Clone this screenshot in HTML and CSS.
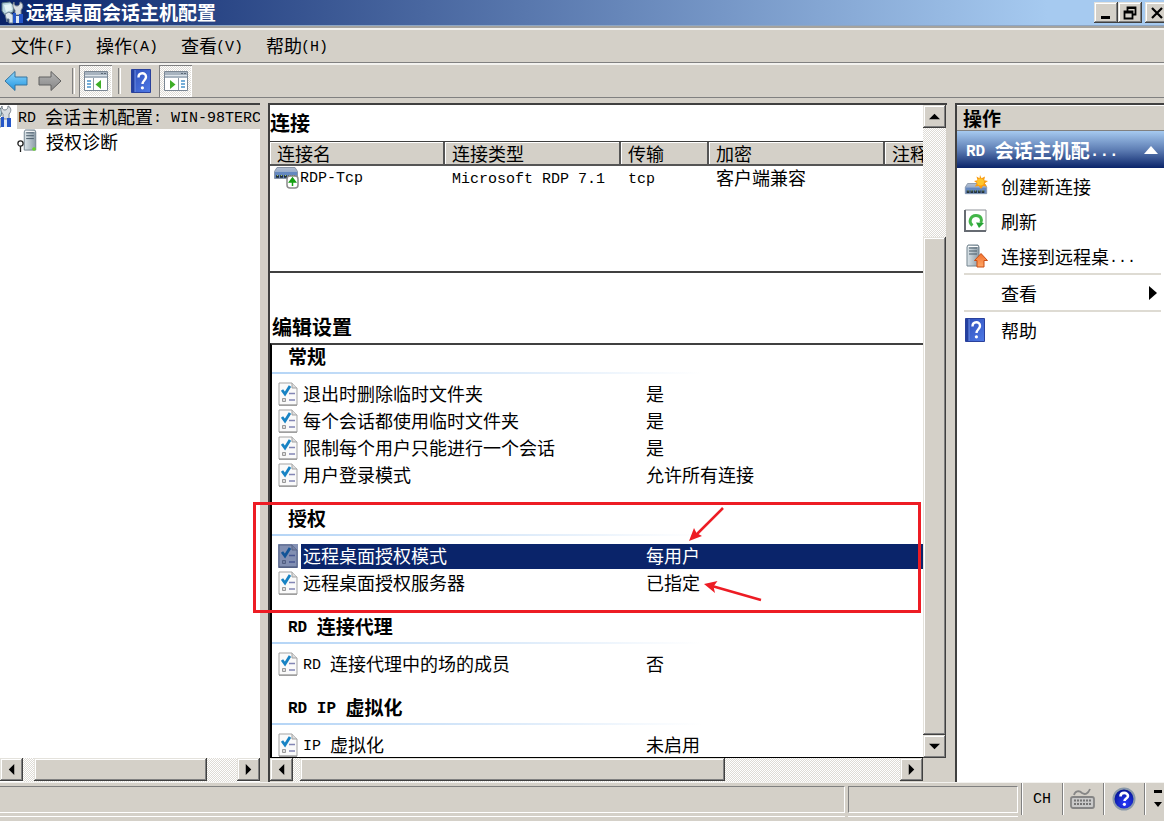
FILE: index.html
```html
<!DOCTYPE html>
<html lang="zh-CN">
<head>
<meta charset="utf-8">
<title>远程桌面会话主机配置</title>
<link rel="stylesheet" href="styles.css">
</head>
<body>
<svg class="defs" aria-hidden="true">
  <defs>
    <linearGradient id="gBlue" x1="0" y1="0" x2="0" y2="1"><stop offset="0" stop-color="#8fd6fb"/><stop offset="1" stop-color="#1e93e0"/></linearGradient>
    <linearGradient id="gGray" x1="0" y1="0" x2="0" y2="1"><stop offset="0" stop-color="#b5b5b5"/><stop offset="1" stop-color="#858585"/></linearGradient>
    <linearGradient id="gHelp" x1="0" y1="0" x2="1" y2="1"><stop offset="0" stop-color="#2c4cb8"/><stop offset="1" stop-color="#4f7ae6"/></linearGradient>
    <linearGradient id="gNic" x1="0" y1="0" x2="0" y2="1"><stop offset="0" stop-color="#b4bfd0"/><stop offset="1" stop-color="#6f92c6"/></linearGradient>
    <linearGradient id="gSrv" x1="0" y1="0" x2="1" y2="0"><stop offset="0" stop-color="#dce5ea"/><stop offset="1" stop-color="#8b9ba6"/></linearGradient>
    <linearGradient id="gOrange" x1="0" y1="0" x2="0" y2="1"><stop offset="0" stop-color="#f2702c"/><stop offset="1" stop-color="#ffa766"/></linearGradient>
    <radialGradient id="gBall" cx=".55" cy=".7" r=".7"><stop offset="0" stop-color="#2a3cff"/><stop offset="1" stop-color="#00108c"/></radialGradient>
  </defs>
  <symbol id="app" viewBox="0 0 24 24">
    <path d="M1 2 9 1l4 4-1 6-8 3-3-4z" fill="#b9d6df" stroke="#5b7783"/>
    <path d="M3 4l7-1 1 6-6 2z" fill="#e4f4f6"/>
    <path d="M13 1c0 3 1 4 3 4s3-2 3-4c3 1 4 5 1 8v5h-6V9c-2-2-3-5-1-8z" fill="#d8dde0" stroke="#77828c"/>
    <path d="M4 13l4-2 4 3v8H8v-4H6v3z" fill="#dfe8ee" stroke="#6d8295"/>
    <path d="M12 12h3v10h-3zM18 13h4v9h-4z" fill="#2456c8"/><path d="M15 15h3v7h-3z" fill="#dfe9f4"/>
  </symbol>
  <symbol id="helpbook" viewBox="0 0 20 24">
    <path d="M.5.5h19v23H.5z" fill="url(#gHelp)" stroke="#2a419c"/><path d="M1 1h3v22H1z" fill="#2340a0"/><path d="M4 1v22" stroke="#6e8fe4"/>
    <path d="M7.500 8.500C7.500 3 15 3 15 8c0 3-3.500 3.500-3.500 7" fill="none" stroke="#fff" stroke-width="2.400"/><circle cx="11.400" cy="18.800" r="1.600" fill="#fff"/>
  </symbol>
  <symbol id="sheet" viewBox="0 0 20 24">
    <path d="M1 1h13l5 5v17H1z" fill="#fafafa" stroke="#a3a3a3"/><path d="M14 1v5h5" fill="#ddd" stroke="#a3a3a3"/><path d="M1 23.200h18" stroke="#888"/>
    <path d="M4 8l3 4 5-8" fill="none" stroke="#1783c4" stroke-width="2.800"/>
    <path d="M11 11.500h6M11 18h6" stroke="#8386b5" stroke-width="1.500"/><path d="M4.500 16.500h3v3h-3z" fill="#ddd" stroke="#999"/>
  </symbol>
  <symbol id="server" viewBox="0 0 14 24">
    <path d="M2 1h10l1 2v19H1V3z" fill="url(#gSrv)" stroke="#73838e"/><path d="M3 4h8M3 7h8M3 10h8" stroke="#485a68"/><path d="M2 2.500h10" stroke="#fff"/>
  </symbol>
  <symbol id="nic" viewBox="0 0 24 14">
    <path d="M3 .5h18l2.500 4v7H.5v-7z" fill="url(#gNic)" stroke="#8895a8"/><path d="M1 5h22v6H1z" fill="#6488c0"/>
    <path d="M2 9.500h20" stroke="#22303c" stroke-width="2.600" stroke-dasharray="3 1"/><path d="M3 8.500h19" stroke="#a5cb62" stroke-dasharray="1 3"/>
  </symbol>
</svg>

<div class="window">
  <header class="titlebar">
    <svg class="app-icon"><use href="#app"/></svg>
    <h1>远程桌面会话主机配置</h1>
    <div class="winbtns">
      <button class="bevel" aria-label="最小化"><svg viewBox="0 0 16 16"><path d="M3 11h9v3H3z"/></svg></button>
      <button class="bevel" aria-label="还原"><svg viewBox="0 0 16 16"><path d="M5.500 6V2.500h8v7H11M5.500 3h8M2.500 6.500h8v7h-8zM2.500 7.500h8" fill="none" stroke="#000" stroke-width="1.800"/></svg></button>
      <button class="bevel close" aria-label="关闭"><svg viewBox="0 0 16 16"><path d="M3 3l10 10M13 3L3 13" stroke="#000" stroke-width="2.200"/></svg></button>
    </div>
  </header>

  <nav class="menubar">
    <button>文件<span class="lat">(F)</span></button>
    <button>操作<span class="lat">(A)</span></button>
    <button>查看<span class="lat">(V)</span></button>
    <button>帮助<span class="lat">(H)</span></button>
  </nav>

  <div class="toolbar">
    <button aria-label="后退"><svg width="24" height="22" viewBox="0 0 24 22"><path d="M1 11 11 1.500V7h12v8H11v5.500z" fill="url(#gBlue)" stroke="#37759f" stroke-linejoin="round"/></svg></button>
    <button aria-label="前进"><svg width="24" height="22" viewBox="0 0 24 22"><path d="M23 11 13 1.500V7H1v8h12v5.500z" fill="url(#gGray)" stroke="#606060" stroke-linejoin="round"/></svg></button>
    <span class="tsep"></span>
    <button class="pressed" aria-label="控制台树"><svg width="24" height="20" viewBox="0 0 24 20"><path d="M.5.500h23v19H.5z" fill="#fff" stroke="#7b8794"/><path d="M1 1h22v6H1z" fill="#a7b3bf"/><path d="M1 4.500h22" stroke="#dde4ea"/><path d="M17 2.500h5" stroke="#5b6875" stroke-dasharray="2 1"/><path d="M9.500 7v12" stroke="#8f9aa5"/><path d="M3 10h4M3 13h4M3 16h4" stroke="#4a94cb" stroke-width="1.500"/><path d="M17 9v9l-5.500-4.500z" fill="#3fae27"/></svg></button>
    <span class="tsep"></span>
    <button aria-label="帮助"><svg width="20" height="24"><use href="#helpbook"/></svg></button>
    <button class="pressed" aria-label="操作窗格"><svg width="24" height="20" viewBox="0 0 24 20"><path d="M.5.500h23v19H.5z" fill="#fff" stroke="#7b8794"/><path d="M1 1h22v6H1z" fill="#a7b3bf"/><path d="M1 4.500h22" stroke="#dde4ea"/><path d="M17 2.500h5" stroke="#5b6875" stroke-dasharray="2 1"/><path d="M14.500 7v12" stroke="#8f9aa5"/><path d="M17 10h4M17 13h4M17 16h4" stroke="#4a94cb" stroke-width="1.500"/><path d="M6 9v9l5.500-4.500z" fill="#3fae27"/></svg></button>
  </div>

  <main class="panes">
    <section class="tree">
      <ul>
        <li class="root"><svg class="root-icon" viewBox="11 0 13 24"><use href="#app" width="24" height="24"/></svg><span class="sel"><span class="lat">RD </span>会话主机配置<span class="lat">: WIN-98TERCI</span></span></li>
        <li class="child"><svg width="20" height="24" viewBox="0 0 20 24"><use href="#server" x="6" width="14" height="23"/><circle cx="17" cy="20" r="1.800" fill="#65d827"/><circle cx="3.500" cy="14.500" r="2.600" fill="#fff" stroke="#222" stroke-width="1.300"/><path d="M3.500 17v6" stroke="#222" stroke-width="1.300"/></svg><span>授权诊断</span></li>
      </ul>
      <div class="hscroll">
        <button class="bevel arrow" aria-label="向左滚动"><svg viewBox="0 0 12 12"><path d="M9 0v12L3 6z"/></svg></button>
        <div class="track"><div class="bevel thumb tree-thumb"></div></div>
        <button class="bevel arrow" aria-label="向右滚动"><svg viewBox="0 0 12 12"><path d="M3 0v12l6-6z"/></svg></button>
      </div>
    </section>

    <section class="center">
      <div class="content">
        <h2 class="conn-title">连接</h2>
        <div class="conn">
          <table>
            <colgroup><col class="c1"><col class="c2"><col class="c3"><col class="c2"><col></colgroup>
            <thead><tr><th>连接名</th><th>连接类型</th><th>传输</th><th>加密</th><th>注释</th></tr></thead>
            <tbody><tr>
              <td class="name"><svg width="25" height="22" viewBox="0 0 25 22"><use href="#nic" width="24" height="14"/><rect x="13" y="9" width="11" height="12" rx="3" fill="#fff" stroke="#8b8b8b" stroke-width="1.500"/><path d="M18.500 19v-4h-3l3-4 3 4h-3" fill="#16a012" stroke="#16a012" stroke-width="1.500"/></svg><span class="lat">RDP-Tcp</span></td>
              <td><span class="lat">Microsoft RDP 7.1</span></td><td><span class="lat">tcp</span></td><td>客户端兼容</td><td></td>
            </tr></tbody>
          </table>
        </div>
        <h2 class="edit-title">编辑设置</h2>
        <div class="settings">
          <section class="group">
            <h3>常规</h3>
            <dl>
              <div><dt><svg><use href="#sheet"/></svg><span>退出时删除临时文件夹</span></dt><dd>是</dd></div>
              <div><dt><svg><use href="#sheet"/></svg><span>每个会话都使用临时文件夹</span></dt><dd>是</dd></div>
              <div><dt><svg><use href="#sheet"/></svg><span>限制每个用户只能进行一个会话</span></dt><dd>是</dd></div>
              <div><dt><svg><use href="#sheet"/></svg><span>用户登录模式</span></dt><dd>允许所有连接</dd></div>
            </dl>
          </section>
          <section class="group">
            <h3>授权</h3>
            <dl>
              <div class="selected"><dt><svg><use href="#sheet"/><rect width="20" height="24" fill="#0a246a" opacity=".5"/></svg><span>远程桌面授权模式</span></dt><dd>每用户</dd></div>
              <div><dt><svg><use href="#sheet"/></svg><span>远程桌面授权服务器</span></dt><dd>已指定</dd></div>
            </dl>
          </section>
          <section class="group">
            <h3><span class="lat">RD </span>连接代理</h3>
            <dl><div><dt><svg><use href="#sheet"/></svg><span><span class="lat">RD </span>连接代理中的场的成员</span></dt><dd>否</dd></div></dl>
          </section>
          <section class="group">
            <h3><span class="lat">RD IP </span>虚拟化</h3>
            <dl><div><dt><svg><use href="#sheet"/></svg><span><span class="lat">IP </span>虚拟化</span></dt><dd>未启用</dd></div></dl>
          </section>
        </div>
      </div>
      <div class="vscroll">
        <button class="bevel arrow" aria-label="向上滚动"><svg viewBox="0 0 12 12"><path d="M0 9h12L6 3z"/></svg></button>
        <div class="track"><div class="bevel thumb"></div></div>
        <button class="bevel arrow" aria-label="向下滚动"><svg viewBox="0 0 12 12"><path d="M0 3h12L6 9z"/></svg></button>
      </div>
      <div class="hscroll">
        <button class="bevel arrow" aria-label="向左滚动"><svg viewBox="0 0 12 12"><path d="M9 0v12L3 6z"/></svg></button>
        <div class="track"><div class="bevel thumb main-thumb"></div></div>
        <button class="bevel arrow" aria-label="向右滚动"><svg viewBox="0 0 12 12"><path d="M3 0v12l6-6z"/></svg></button>
      </div>
      <div class="corner"></div>
    </section>

    <aside class="actions">
      <h2>操作</h2>
      <button class="banner"><span><span class="lat">RD </span>会话主机配<span class="lat">...</span></span><svg width="14" height="8" viewBox="0 0 14 8"><path d="M0 8 7 0l7 8z" fill="#fff"/></svg></button>
      <div class="items">
        <button><svg width="24" height="22" viewBox="0 0 24 22"><use href="#nic" y="8" width="24" height="13"/><path d="M16 0l1.500 3.200L21 1.500l-.8 3.700 3.800.8-3.200 2.200 2.200 3.300-4-.6-2 3.100-2.200-3.100-4 .6 2.200-3.300L10 6l3.500-.8-1-3.700 3 1.700z" fill="#f99c12"/><circle cx="16.500" cy="7" r="3.500" fill="#ffc52a"/></svg><span>创建新连接</span></button>
        <button><svg width="24" height="24" viewBox="0 0 24 24"><path d="M1 1h21v21H1z" fill="#fff" stroke="#8e9298"/><path d="M1 1v21h21" fill="none" stroke="#666b72" stroke-width="2"/><path d="M8.500 16.500C4 13 6.500 6.500 12 6.500c5 0 6.500 4 4.800 7.500" fill="none" stroke="#43b649" stroke-width="3"/><path d="M12 13.500l8 .5-5 5z" fill="#27a336"/></svg><span>刷新</span></button>
        <button><svg width="24" height="24" viewBox="0 0 24 24"><use href="#server" x="2" width="14" height="24"/><path d="M17 9.500l6.500 7H20V23h-7v-6.500h-2.500z" fill="url(#gOrange)" stroke="#c84d15"/></svg><span>连接到远程桌<span class="lat">...</span></span></button>
        <hr>
        <button><span class="noicon"></span><span>查看</span><svg class="more" width="8" height="14" viewBox="0 0 8 14"><path d="M0 0l8 7-8 7z"/></svg></button>
        <hr>
        <button><svg width="24" height="24"><use href="#helpbook" x="1" width="20" height="24"/></svg><span>帮助</span></button>
      </div>
    </aside>

    <div class="mark"></div>
    <svg class="mark-arrows" width="80" height="100" viewBox="0 0 80 100" fill="none" stroke="#ed1c24" stroke-width="2.500">
      <path d="M35 4 8 31"/><path d="M1 37 6 24l2.500 5 5.500 3z" fill="#ed1c24" stroke="none"/>
      <path d="M73 96 24 82"/><path d="M16 80l13.500-3-4 5.500 1.500 6.500z" fill="#ed1c24" stroke="none"/>
    </svg>
  </main>

  <footer class="status">
    <div class="cell wide"></div>
    <div class="cell small"></div>
    <div class="tray">
      <button><span class="lat">CH</span></button>
      <button aria-label="键盘"><svg width="26" height="22" viewBox="0 0 26 22"><path d="M4 7c1-4 5-5 8-2 3 2 6 1 8-4" fill="none" stroke="#868686" stroke-width="1.800"/><rect x="1" y="9" width="23" height="11" rx="2" fill="#c9c9c9" stroke="#858585" stroke-width="1.800"/><path d="M4 12.500h17M4 16h17" stroke="#747474" stroke-width="2" stroke-dasharray="2 1"/></svg></button>
      <button aria-label="帮助"><svg width="24" height="24" viewBox="0 0 24 24"><circle cx="12" cy="12" r="10.500" fill="url(#gBall)" stroke="#8a99aa" stroke-width="2"/><path d="M8.500 9.500c0-5 7.500-4.500 7.500-.5 0 2.500-3.500 2.500-3.500 5" fill="none" stroke="#fff" stroke-width="2.600"/><circle cx="12.400" cy="17.300" r="1.600" fill="#fff"/></svg></button>
      <button class="last" aria-label="选项"><svg width="8" height="18" viewBox="0 0 8 18"><path d="M0 0h8v3H0zM0 12h8l-4 5z"/></svg></button>
    </div>
  </footer>
</div>
</body>
</html>
```

FILE: styles.css
```css
:root {
  --face: #d4d0c8;
  --shade: #808080;
  --dark: #404040;
  --navy: #0a246a;
}
* { box-sizing: border-box; }
body {
  margin: 0;
  background: var(--face);
  color: #000;
  font: 18px/24px "Noto Sans CJK SC", sans-serif;
}
h1, h2, h3, ul, dl, dd { margin: 0; padding: 0; }
button { font: inherit; color: inherit; background: none; border: 0; padding: 0; }
.defs { position: absolute; width: 0; height: 0; }
.lat { font-family: "Liberation Mono", monospace; font-size: 15px; line-height: 1; vertical-align: 2px; white-space: pre; }
.window { display: flex; flex-direction: column; height: 100vh; overflow: hidden; }

.bevel {
  background: var(--face);
  box-shadow: inset -1px -1px var(--dark), inset 1px 1px #e4e2dc, inset -2px -2px var(--shade), inset 2px 2px #fff;
}

/* title bar */
.titlebar {
  display: flex;
  align-items: center;
  flex: none;
  height: 26px;
  padding-left: 1px;
  background: linear-gradient(90deg, var(--navy), #a6caf0 90%);
  border-bottom: 1px solid #8ea6c4;
  color: #fff;
}
.app-icon { width: 24px; height: 24px; }
.titlebar h1 { margin-left: 1px; font-size: 19px; line-height: 22px; padding-bottom: 2px; font-weight: 700; }
.winbtns { display: flex; margin-left: auto; }
.winbtns button { display: grid; place-items: center; width: 24px; height: 21px; }
.winbtns svg { width: 16px; height: 16px; }
.winbtns .close { margin-left: 3px; margin-right: -5px; }

/* menu and toolbar */
.menubar {
  display: flex;
  flex: none;
  gap: 23px;
  height: 37px;
  padding: 0 11px;
  border-top: 2px solid #a5a39e;
  border-bottom: 1px solid var(--shade);
  box-shadow: inset 0 2px #f3f2ef;
}
.menubar .lat { margin-left: -1px; }
.toolbar {
  display: flex;
  align-items: center;
  flex: none;
  height: 35px;
  padding-left: 4px;
  border-top: 2px solid #f3f2ef;
  border-bottom: 1px solid var(--shade);
}
.toolbar button { display: grid; place-items: center; height: 32px; }
.toolbar button + button { margin-left: 10px; }
.tsep { width: 3px; height: 26px; margin: 0 4px 0 10px; border-left: 1px solid var(--shade); border-right: 1px solid #fff; }
.pressed + .tsep { margin-left: 6px; }
.tsep + button:not(.pressed) { margin-left: 6px; }
.toolbar .pressed {
  width: 33px;
  background: repeating-conic-gradient(#fff 0 25%, #dedbd5 0 50%) 0 0 / 2px 2px;
  box-shadow: inset 1px 1px var(--shade), inset -1px -1px #fff;
}
.toolbar button + .pressed { margin-left: 8px; }

/* panes */
.panes {
  position: relative;
  flex: 1;
  min-height: 0;
  display: grid;
  grid-template-columns: 260px minmax(0, 1fr) 209px;
  grid-template-rows: minmax(0, 1fr);
  column-gap: 8px;
  margin-top: 5px;
  border-bottom: 1px solid #f3f2ef;
}
.tree, .actions { background: #fff; min-width: 0; border-top: 2px solid var(--dark); }
.tree { display: flex; flex-direction: column; }
.tree ul { flex: 1; list-style: none; overflow: hidden; }
.tree li { display: flex; align-items: center; height: 24px; line-height: 22px; white-space: nowrap; }
.root-icon { flex: none; width: 13px; height: 24px; }
.root .sel { flex: 1; min-width: 0; height: 24px; overflow: hidden; margin-left: 4px; padding-left: 1px; background: var(--face); }
.child { padding-left: 17px; gap: 9px; }

.center {
  display: grid;
  grid-template-columns: minmax(0, 1fr) 24px;
  grid-template-rows: minmax(0, 1fr) 24px;
  border-top: 2px solid var(--dark);
  border-left: 2px solid var(--dark);
}
.content { display: flex; flex-direction: column; background: #fff; overflow: hidden; border-bottom: 1px solid #000; }
.corner { background: var(--face); }
.conn-title, .edit-title { font-size: 20px; line-height: 28px; font-weight: 700; }
.conn-title { padding-top: 4px; height: 36px; flex: none; }
.conn { flex: none; height: 132px; border-top: 1px solid var(--dark); border-bottom: 2px solid var(--dark); }
.edit-title { flex: none; height: 70px; padding: 40px 0 0 2px; }
table { width: 100%; table-layout: fixed; border-collapse: separate; border-spacing: 0; white-space: nowrap; }
.c1 { width: 175px; }
.c2 { width: 176px; }
.c3 { width: 88px; }
th {
  height: 24px;
  padding: 0 0 0 7px;
  line-height: 22px;
  text-align: left;
  font-weight: 400;
  overflow: hidden;
  background: var(--face);
  border-right: 2px solid #555;
  border-bottom: 2px solid #555;
  box-shadow: inset 1px 1px #fff;
}
th:last-child { border-right: 0; }
td { height: 24px; padding: 0 0 2px 7px; line-height: 22px; }
td.name { display: flex; align-items: center; gap: 1px; padding: 0 0 0 4px; }

.settings { flex: 1; min-height: 0; overflow: hidden; border-top: 2px solid var(--dark); border-left: 2px solid #000; }
.group { padding-bottom: 16px; }
.group h3 {
  height: 29px;
  padding-left: 16px;
  font-size: 19px;
  line-height: 22px;
  font-weight: 700;
  background: linear-gradient(90deg, #b5d5f6, #d8e8f9 50%, #fff) 0 100% / 430px 2px no-repeat;
}
.group + .group { padding-top: 1px; }
.group h3 .lat { font-size: 16px; }
.group dl { padding-top: 8px; }
.group dl > div { display: grid; grid-template-columns: 372px 1fr; height: 27px; line-height: 23px; }
dt { display: flex; padding-left: 6px; gap: 3px; }
dt > svg { width: 20px; height: 24px; flex: none; }
dt > span { flex: 1; padding-left: 2px; }
dd { padding-left: 2px; }
.selected dt > span, .selected dd { height: 25px; background: var(--navy); color: #fff; }

/* scroll bars */
.hscroll, .vscroll { display: flex; }
.hscroll { flex: none; height: 24px; }
.vscroll { flex-direction: column; border-right: 1px solid var(--face); }
.arrow { display: grid; place-items: center; flex: none; width: 23px; height: 23px; }
.arrow svg { width: 11px; height: 11px; }
.track { position: relative; display: flex; flex: 1; background: repeating-conic-gradient(#fff 0 25%, #dedbd5 0 50%) 0 0 / 2px 2px; }
.hscroll .thumb { height: 23px; }
.tree-thumb { width: 81%; margin-left: 11px; }
.main-thumb { width: 70%; margin-left: 7px; }
.vscroll .track { flex-direction: column; justify-content: flex-end; }
.vscroll .thumb { height: 82%; }

/* actions */
.actions { border-left: 2px solid var(--dark); }
.actions h2 {
  height: 26px;
  padding-left: 6px;
  font-size: 19px;
  line-height: 23px;
  background: var(--face);
  border-top: 1px solid #fff;
  border-bottom: 1px solid var(--shade);
}
.banner {
  display: flex;
  align-items: center;
  justify-content: space-between;
  width: 100%;
  height: 37px;
  padding: 0 6px 0 9px;
  background: linear-gradient(#a6caf0, #5f7fb5 50%, var(--navy));
  color: #fff;
  font-size: 19px;
  font-weight: 700;
}
.banner .lat { font-size: 16px; }
.items { padding: 0 3px 0 7px; }
.items button { display: flex; align-items: center; gap: 13px; width: 100%; height: 35px; }
.noicon { width: 24px; }
.more { margin-left: auto; margin-right: 4px; }
hr { height: 2px; margin: 0; border: 0; background: #dedbd3; }

/* status bar */
.status { display: flex; flex: none; height: 38px; padding-top: 3px; gap: 3px; }
.cell { height: 27px; border-top: 1px solid var(--shade); border-bottom: 1px solid #fff; border-right: 1px solid #fff; box-shadow: 0 3px var(--face), 0 4px #fff; }
.wide { flex: 1; }
.small { width: 170px; border-left: 1px solid var(--shade); }
.tray { display: flex; margin-top: -3px; height: 32px; border-left: 1px solid var(--shade); }
.tray button { display: grid; place-items: center; width: 41px; border-right: 1px solid var(--shade); box-shadow: inset 1px 0 #fff; }
.tray .last { width: 19px; border: 0; padding-left: 6px; }

/* highlight drawn over the licensing group */
.mark { position: absolute; left: 253px; right: 243px; top: 399px; height: 111px; border: 3px solid #ed1c24; }
.mark-arrows { position: absolute; left: 688px; top: 401px; }
```
